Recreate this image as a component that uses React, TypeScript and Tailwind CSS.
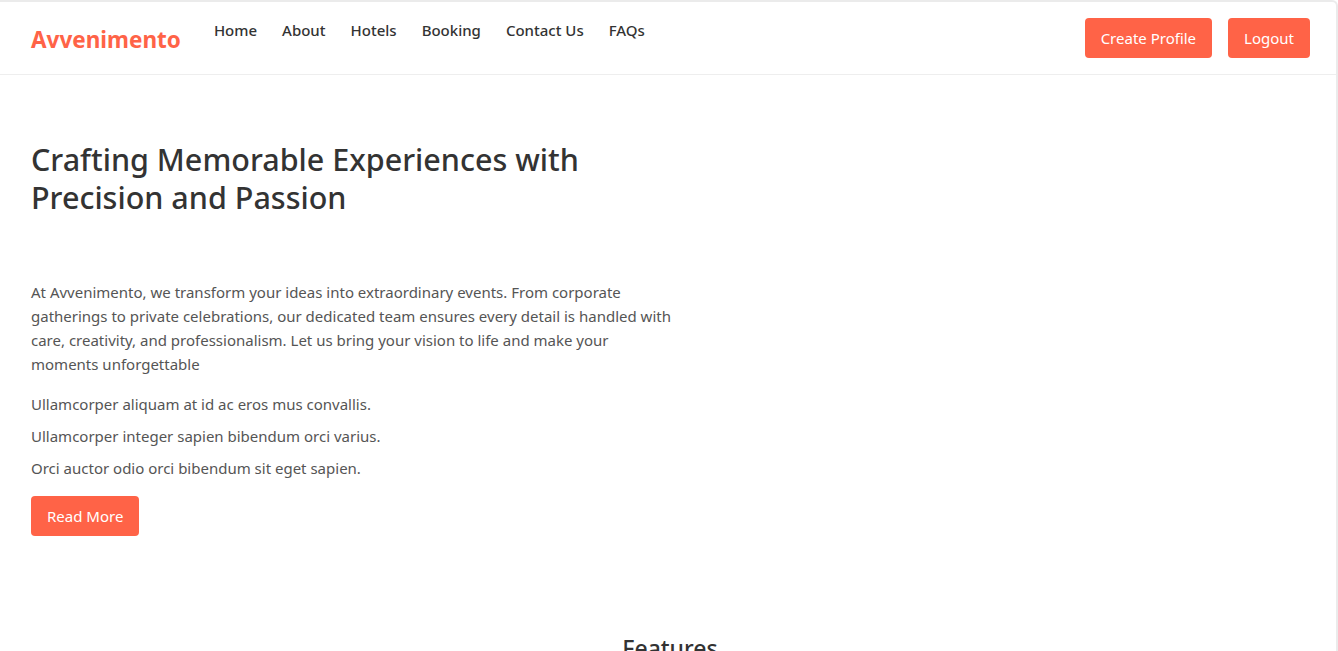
import React from "react";

export default function App() {
  const font = { fontFamily: '"Noto Sans", "Open Sans", sans-serif' };
  return (
    <div className="min-h-[651px] bg-white border-t-2 border-r-2 border-[#ebebeb] rounded-tr-md text-[#333]" style={font}>
      <header className="h-[73px] border-b border-[#eeeeee] flex items-start justify-between pl-[31px] pr-[26px]">
        <div className="flex items-start">
          <div className="mt-[22px] text-[22.5px] leading-[32px] font-bold text-[#ff6347]">Avvenimento</div>
          <nav className="flex gap-[25px] ml-[33px] mt-[14px]">
            {["Home", "About", "Hotels", "Booking", "Contact Us", "FAQs"].map((l) => (
              <a key={l} className="text-[15px] leading-[28px] font-medium text-[#333]">{l}</a>
            ))}
          </nav>
        </div>
        <div className="flex gap-[16px] mt-[16px]">
          <button className="h-[40px] px-[16px] bg-[#ff6347] text-white text-[15px] rounded-[4px]">Create Profile</button>
          <button className="h-[40px] px-[16px] bg-[#ff6347] text-white text-[15px] rounded-[4px]">Logout</button>
        </div>
      </header>
      <section className="pl-[31px] pt-[65px] w-[680px]">
        <h1 className="text-[30.5px] leading-[38px] font-medium text-[#333] w-[580px]">
          Crafting Memorable Experiences with Precision and Passion
        </h1>
        <p className="mt-[64px] w-[645px] text-[15px] leading-[24px] text-[#555]">
          At Avvenimento, we transform your ideas into extraordinary events. From corporate gatherings to private celebrations, our dedicated team ensures every detail is handled with care, creativity, and professionalism. Let us bring your vision to life and make your moments unforgettable
        </p>
        <div className="mt-[16px] flex flex-col gap-[8px] text-[15px] leading-[24px] text-[#555]">
          <p>Ullamcorper aliquam at id ac eros mus convallis.</p>
          <p>Ullamcorper integer sapien bibendum orci varius.</p>
          <p>Orci auctor odio orci bibendum sit eget sapien.</p>
        </div>
        <button className="mt-[16px] h-[40px] px-[16px] bg-[#ff6347] text-white text-[15px] rounded-[4px]">Read More</button>
      </section>
      <h2 className="mt-[96px] pl-[4px] text-center text-[23px] leading-[32px] font-medium text-[#333]">Features</h2>
    </div>
  );
}
